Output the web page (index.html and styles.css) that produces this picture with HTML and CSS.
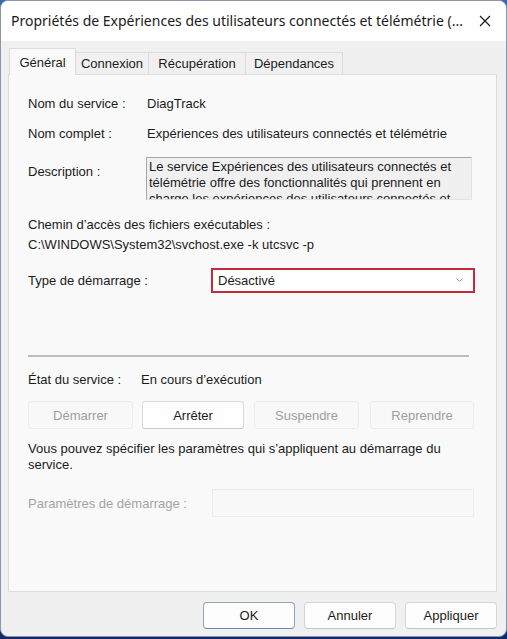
FILE: index.html
```html
<!DOCTYPE html>
<html lang="fr">
<head>
<meta charset="utf-8">
<title>Propriétés</title>
<link rel="stylesheet" href="styles.css">
</head>
<body>
<div class="window">
  <div class="titlebar">
    <span class="title">Propriétés de Expériences des utilisateurs connectés et télémétrie (...</span>
    <svg class="close" width="12" height="12" viewBox="0 0 12 12"><path d="M1 1 L11 11 M11 1 L1 11" stroke="#1a1a1a" stroke-width="1.2" fill="none"/></svg>
  </div>
  <div class="client">
    <div class="tabs">
      <div class="tab active">Général</div>
      <div class="tab">Connexion</div>
      <div class="tab">Récupération</div>
      <div class="tab">Dépendances</div>
    </div>
    <div class="panel">
      <div class="row r1"><span class="lbl w119">Nom du service :</span><span>DiagTrack</span></div>
      <div class="row r2"><span class="lbl w119">Nom complet :</span><span>Expériences des utilisateurs connectés et télémétrie</span></div>
      <div class="row desc-row"><span class="lbl w118 desc-lbl">Description :</span>
        <div class="desc-box"><div class="desc-text">Le service Expériences des utilisateurs connectés et télémétrie offre des fonctionnalités qui prennent en charge les expériences des utilisateurs connectés et</div></div>
      </div>
      <div class="path-lbl">Chemin d’accès des fichiers exécutables :</div>
      <div class="path">C:\WINDOWS\System32\svchost.exe -k utcsvc -p</div>
      <div class="row type-row"><span class="lbl w182">Type de démarrage :</span>
        <div class="select"><span>Désactivé</span>
          <svg class="chev" width="7" height="4" viewBox="0 0 7 4"><path d="M0.5 0.5 L3.5 3.5 L6.5 0.5" stroke="#8a8a8a" stroke-width="0.9" fill="none"/></svg>
        </div>
      </div>
      <div class="sep"></div>
      <div class="row etat"><span class="lbl w112">État du service :</span><span>En cours d’exécution</span></div>
      <div class="btns">
        <div class="btn dis b1">Démarrer</div>
        <div class="btn b2">Arrêter</div>
        <div class="btn dis b3">Suspendre</div>
        <div class="btn dis b4">Reprendre</div>
      </div>
      <div class="info">Vous pouvez spécifier les paramètres qui s’appliquent au démarrage du service.</div>
      <div class="row params"><span class="lbl w183 grey">Paramètres de démarrage :</span><div class="input"></div></div>
    </div>
    <div class="footer">
      <div class="fbtn ok">OK</div>
      <div class="fbtn">Annuler</div>
      <div class="fbtn">Appliquer</div>
    </div>
  </div>
</div>
</body>
</html>
```
FILE: styles.css
```css
html, body {
  margin: 0;
  padding: 0;
}
body {
  width: 507px;
  height: 639px;
  background: linear-gradient(180deg, #3a66b8 0%, #1d3f8f 60%, #122a6b 100%);
  font-family: "Liberation Sans", Arial, sans-serif;
  font-size: 13px;
  color: #1b1b1b;
  overflow: hidden;
}
.window {
  width: 505px;
  height: 635px;
  border: 1px solid #8d96a8;
  border-radius: 8px;
  overflow: hidden;
  background: #f0f0f0;
  display: flex;
  flex-direction: column;
}
.titlebar {
  height: 40px;
  background: #ffffff;
  display: flex;
  align-items: center;
  padding-left: 10px;
  flex-shrink: 0;
}
.title {
  font-family: "Noto Sans", "Open Sans", sans-serif;
  font-size: 14px;
  color: #1a1a1a;
  white-space: nowrap;
  flex: 1;
  padding-bottom: 1px;
}
.close {
  margin-right: 15px;
  margin-left: 10px;
}
.client {
  flex: 1;
  display: flex;
  flex-direction: column;
}
.tabs {
  display: flex;
  align-items: flex-end;
  padding-left: 8px;
  margin-top: 7px;
  height: 26px;
  position: relative;
  z-index: 1;
}
.tab {
  height: 22px;
  line-height: 22px;
  padding: 0;
  text-align: center;
  border: 1px solid #dcdcdc;
  border-bottom: none;
  background: #f0f0f0;
  box-sizing: border-box;
}
.tab + .tab { border-left: none; }
.tab.active {
  line-height: 28px;
  width: 67px;
  background: #f9f9f9;
  margin-bottom: -1px;
  height: 27px;
}
.tabs .tab:nth-child(2) { width: 73px; }
.tabs .tab:nth-child(3) { width: 97px; }
.tabs .tab:nth-child(4) { width: 97px; }
.panel {
  margin: 0 9px 0 7px;
  height: 518px;
  background: #f9f9f9;
  border: 1px solid #dcdcdc;
  padding-left: 19px;
  box-sizing: border-box;
}
.row {
  display: flex;
  align-items: center;
  line-height: 17px;
}
.lbl { flex-shrink: 0; }
.w119 { width: 119px; }
.w118 { width: 118px; }
.w182 { width: 183px; }
.w183 { width: 184px; }
.w112 { width: 113px; }
.r1 { margin-top: 20px; }
.r2 { margin-top: 13px; }
.desc-row {
  margin-top: 15px;
  align-items: flex-start;
}
.desc-lbl { padding-top: 6px; }
.desc-box {
  width: 326px;
  height: 43px;
  box-sizing: border-box;
  background: #f0f0f0;
  border-top: 1px solid #a7a7a7;
  border-left: 1px solid #a7a7a7;
  border-right: 1px solid #e3e3e3;
  border-bottom: 1px solid #e3e3e3;
  padding: 1px 0 0 2px;
  overflow: hidden;
}
.desc-text {
  width: 310px;
  line-height: 16px;
}
.path-lbl { margin-top: 16px; line-height: 17px; }
.path { margin-top: 3px; line-height: 17px; }
.type-row { margin-top: 15px; }
.select {
  width: 264px;
  height: 25px;
  box-sizing: border-box;
  border: 2px solid #c42b3a;
  background: #ffffff;
  display: flex;
  align-items: center;
  justify-content: space-between;
  padding: 0 10px 0 5px;
}
.chev { margin-top: -1px; }
.sep {
  margin-top: 62px;
  width: 441px;
  height: 2px;
  background: #bdbdbd;
}
.etat { margin-top: 14px; }
.btns {
  display: flex;
  margin-top: 13px;
  height: 28px;
}
.btn {
  height: 28px;
  box-sizing: border-box;
  border: 1px solid #e2e2e2;
  border-radius: 3px;
  background: #fbfbfb;
  display: flex;
  align-items: center;
  justify-content: center;
  width: 105px;
}
.btn.dis { color: #9e9e9e; border-color: #ececec; background: #f8f8f8; }
.b2 { width: 102px; margin-left: 9px; border-color: #dadada; border-bottom-color: #c8c8c8; background: #fefefe; }
.b3 { margin-left: 10px; }
.b4 { width: 104px; margin-left: 11px; }
.info {
  margin-top: 12px;
  line-height: 16px;
  width: 445px;
}
.params { margin-top: 16px; }
.grey { color: #a3a3a3; }
.input {
  width: 262px;
  height: 28px;
  box-sizing: border-box;
  border: 1px solid #ececec;
  background: #f8f8f8;
}
.footer {
  display: flex;
  justify-content: flex-end;
  gap: 9px;
  padding: 10px 9px 0 0;
}
.fbtn {
  width: 92px;
  height: 27px;
  box-sizing: border-box;
  border: 1px solid #d6d6d6;
  border-bottom-color: #c4c4c4;
  border-radius: 4px;
  background: #fdfdfd;
  display: flex;
  align-items: center;
  justify-content: center;
  color: #1b1b1b;
}
.fbtn.ok {
  border-color: #8fa3bb;
  border-bottom-color: #6f87a6;
}
```
